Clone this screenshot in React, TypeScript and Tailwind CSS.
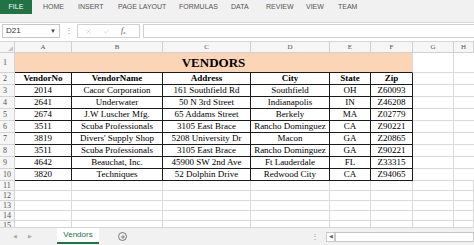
import { Check, X, Plus } from 'lucide-react'

const serif = { fontFamily: '"Liberation Serif", "Times New Roman", serif' }
const sans = { fontFamily: '"Liberation Sans", Arial, sans-serif' }

const cols = ['A', 'B', 'C', 'D', 'E', 'F', 'G', 'H']
const gridCols = 'grid grid-cols-[15px_57px_91px_88px_79px_41px_42px_41px_1fr]'

const header = ['VendorNo', 'VendorName', 'Address', 'City', 'State', 'Zip']
const rows = [
  ['2014', 'Cacor Corporation', '161 Southfield Rd', 'Southfield', 'OH', 'Z60093'],
  ['2641', 'Underwater', '50 N 3rd Street', 'Indianapolis', 'IN', 'Z46208'],
  ['2674', 'J.W Luscher Mfg.', '65 Addams Street', 'Berkely', 'MA', 'Z02779'],
  ['3511', 'Scuba Professionals', '3105 East Brace', 'Rancho Dominguez', 'CA', 'Z90221'],
  ['3819', "Divers' Supply Shop", '5208 University Dr', 'Macon', 'GA', 'Z20865'],
  ['3511', 'Scuba Professionals', '3105 East Brace', 'Rancho Dominguez', 'GA', 'Z90221'],
  ['4642', 'Beauchat, Inc.', '45900 SW 2nd Ave', 'Ft Lauderdale', 'FL', 'Z33315'],
  ['3820', 'Techniques', '52 Dolphin Drive', 'Redwood City', 'CA', 'Z94065'],
]

const tabs = [
  { label: 'HOME', w: 'w-[35px]' },
  { label: 'INSERT', w: 'w-[40px]' },
  { label: 'PAGE LAYOUT', w: 'w-[61px]' },
  { label: 'FORMULAS', w: 'w-[52px]' },
  { label: 'DATA', w: 'w-[35px]' },
  { label: 'REVIEW', w: 'w-[40px]' },
  { label: 'VIEW', w: 'w-[32px]' },
  { label: 'TEAM', w: 'w-[40px]' },
]

function RowNum({ n, h }: { n: number; h: string }) {
  return (
    <div className={`${h} flex items-center pl-[3px] text-[8px] text-[#555] bg-[#f6f6f6] border-r border-b border-[#d4d4d4]`} style={serif}>
      {n}
    </div>
  )
}

function TableRow({ n, cells, bold }: { n: number; cells: string[]; bold?: boolean }) {
  return (
    <div className={gridCols}>
      <RowNum n={n} h="h-[12px]" />
      {cells.map((c, i) => (
        <div
          key={i}
          className={`h-[12px] flex items-center justify-center whitespace-nowrap overflow-hidden text-[9px] leading-none text-black border-r border-b border-[#1a1a1a] ${bold ? 'font-bold' : ''}`}
          style={serif}
        >
          {c}
        </div>
      ))}
      <div className="h-[12px] border-r border-b border-[#dadada]" />
      <div className="h-[12px] border-b border-[#dadada]" />
    </div>
  )
}

function EmptyRow({ n }: { n: number }) {
  return (
    <div className={gridCols}>
      <RowNum n={n} h="h-[10px]" />
      {cols.map((c) => (
        <div key={c} className="h-[10px] border-r border-b border-[#dadada]" />
      ))}
    </div>
  )
}

export default function App() {
  return (
    <div className="w-[474px] h-[245px] overflow-hidden bg-white flex flex-col" style={sans}>
      {/* Ribbon tabs */}
      <div className="h-[23px] shrink-0 bg-[#f1f1f1] border-b border-[#d6d6d6] flex items-start">
        <div className="w-[32px] h-[14px] bg-[#217346] text-white text-[7px] flex items-center justify-center">FILE</div>
        <div className="w-[11px]" />
        {tabs.map((t) => (
          <div key={t.label} className={`${t.w} h-[14px] flex items-center text-[7px] text-[#555] whitespace-nowrap`}>
            {t.label}
          </div>
        ))}
      </div>

      {/* Formula bar */}
      <div className="h-[19px] shrink-0 bg-white border-b border-[#d6d6d6] flex items-start pt-[1px]">
        <div className="ml-[2px] w-[58px] h-[14px] border border-[#c6c6c6] flex items-center justify-between px-[3px]">
          <span className="text-[8px] text-[#333]">D21</span>
          <span className="text-[6px] text-[#444]">▼</span>
        </div>
        <div className="w-[17px] h-[14px] flex items-center justify-center text-[8px] text-[#999]">⋮</div>
        <div className="w-[63px] h-[14px] border border-[#d0d0d0] flex items-center pl-[7px] gap-[11px]">
          <X size={7} color="#b5b5b5" strokeWidth={1.5} />
          <Check size={7} color="#b5b5b5" strokeWidth={1.5} />
          <span className="text-[8px] italic text-[#555]" style={serif}>
            f<sub className="text-[5px]">x</sub>
          </span>
        </div>
        <div className="ml-[3px] flex-1 h-[14px] border border-[#d0d0d0] border-r-0" />
      </div>

      {/* Sheet */}
      <div className="h-[185px] shrink-0 overflow-hidden">
        <div className={gridCols}>
          <div className="h-[11px] bg-[#f6f6f6] border-r border-b border-[#d0d0d0] flex items-end justify-end p-[1px]">
            <div className="w-0 h-0 border-l-[5px] border-l-transparent border-b-[5px] border-b-[#c8c8c8]" />
          </div>
          {cols.map((c) => (
            <div key={c} className="h-[11px] bg-[#f6f6f6] border-r border-b border-[#d0d0d0] flex items-center justify-center text-[7px] text-[#555]" style={serif}>
              {c}
            </div>
          ))}
        </div>

        <div className={gridCols}>
          <RowNum n={1} h="h-[20px]" />
          <div className="col-span-6 h-[20px] bg-[#fbd5b5] border-b border-[#1a1a1a] border-r border-r-[#dadada] flex items-center justify-center text-[13px] font-bold text-black" style={serif}>
            VENDORS
          </div>
          <div className="h-[20px] border-r border-b border-[#dadada]" />
          <div className="h-[20px] border-b border-[#dadada]" />
        </div>

        <TableRow n={2} cells={header} bold />
        {rows.map((r, i) => (
          <TableRow key={i} n={i + 3} cells={r} />
        ))}
        {[11, 12, 13, 14, 15].map((n) => (
          <EmptyRow key={n} n={n} />
        ))}
      </div>

      {/* Sheet tabs */}
      <div className="flex-1 bg-[#f1f1f1] border-t border-[#d6d6d6] flex items-start">
        <div className="w-[57px] h-[17px] flex items-center gap-[11px] pl-[13px] text-[5px] text-[#aaa]">
          <span>◀</span>
          <span>▶</span>
        </div>
        <div className="w-[42px] h-[16px] bg-white border-b-2 border-[#217346] flex items-center justify-center text-[8px] text-[#217346]">
          Vendors
        </div>
        <div className="ml-[19px] mt-[4px] w-[9px] h-[9px] rounded-full border border-[#777] flex items-center justify-center">
          <Plus size={6} color="#555" strokeWidth={2.5} />
        </div>
        <div className="ml-[184px] h-[17px] flex items-center text-[8px] text-[#999]">⋮</div>
        <div className="ml-[7px] mt-[4px] w-[9px] h-[10px] border border-[#c8c8c8] bg-white flex items-center justify-center text-[5px] text-[#666]">◀</div>
        <div className="mt-[4px] flex-1 h-[10px] border border-[#c8c8c8] bg-white" />
      </div>
    </div>
  )
}
